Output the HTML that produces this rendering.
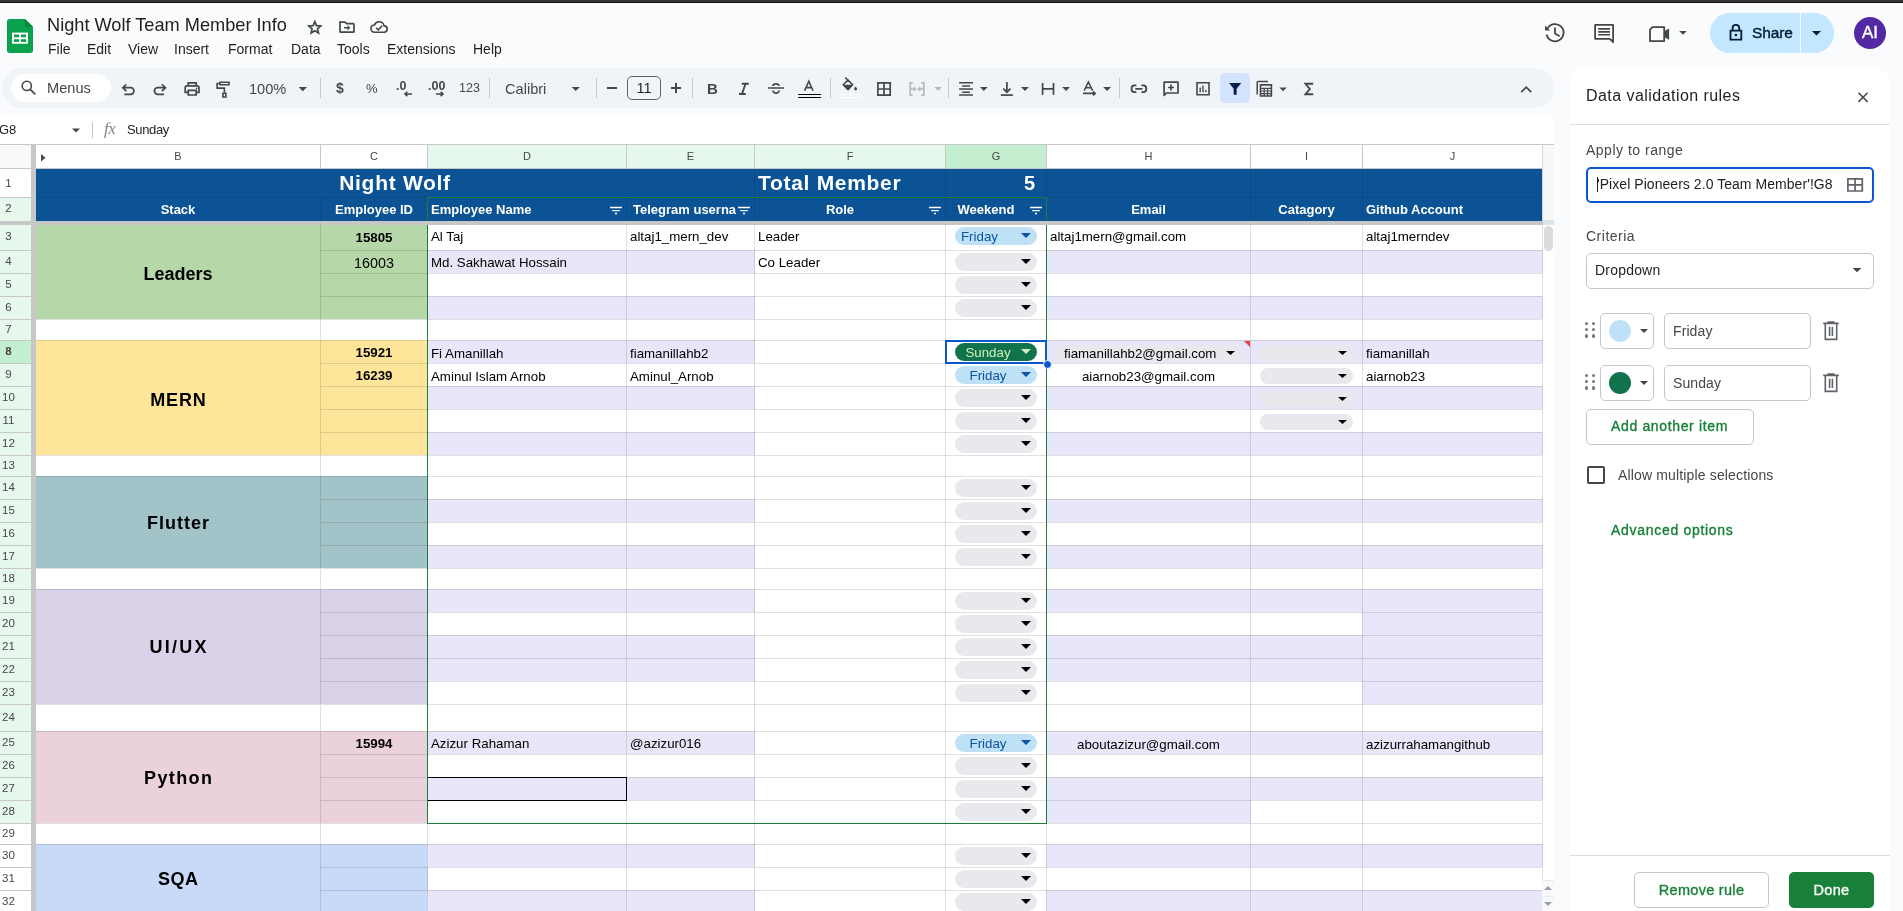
<!DOCTYPE html><html><head><meta charset="utf-8"><style>
html,body{margin:0;padding:0;}
body{width:1903px;height:911px;overflow:hidden;position:relative;background:#f9fbfd;font-family:"Liberation Sans", sans-serif;color:#1f1f1f;}
div{box-sizing:border-box;}
#wrap{position:absolute;left:0;top:0;width:1903px;height:911px;will-change:transform;}
</style></head><body><div id="wrap">
<div style="position:absolute;left:0px;top:0px;width:1903px;height:2px;background:#363636;"></div>
<div style="position:absolute;left:0px;top:2px;width:1903px;height:1px;background:#121212;"></div>
<svg style="position:absolute;left:7px;top:19px;" width="26" height="34" viewBox="0 0 26 35" preserveAspectRatio="none"><path d="M2.5 0H18L26 8V32.5C26 33.9 24.9 35 23.5 35H2.5C1.1 35 0 33.9 0 32.5V2.5C0 1.1 1.1 0 2.5 0Z" fill="#0ba24d"/><path d="M18 0L26 8H20C18.9 8 18 7.1 18 6Z" fill="#078a3c"/><rect x="5" y="14" width="16" height="11.5" fill="#fff"/><rect x="7" y="16" width="5" height="2.8" fill="#0ba24d"/><rect x="14" y="16" width="5" height="2.8" fill="#0ba24d"/><rect x="7" y="20.8" width="5" height="2.8" fill="#0ba24d"/><rect x="14" y="20.8" width="5" height="2.8" fill="#0ba24d"/></svg>
<div style="position:absolute;left:47px;top:14px;white-space:nowrap;font-size:18.2px;line-height:22px;color:#1f1f1f;">Night Wolf Team Member Info</div>
<svg style="position:absolute;left:300px;top:14px;overflow:visible" width="30" height="26" viewBox="300 14 30 26"><path d="M314.8 21.62 316.47 25.66 320.7 26.02 317.53 28.83 318.5 32.88 314.8 30.68 311.1 32.88 312.07 28.83 308.9 26.02 313.13 25.66Z" fill="none" stroke="#444746" stroke-width="1.7" stroke-linejoin="miter"/></svg>
<svg style="position:absolute;left:335px;top:16px;overflow:visible" width="25" height="22" viewBox="335 16 25 22"><path d="M340 22.2H345L346.6 23.6H353.2C353.6 23.6 354 24 354 24.4V31.4C354 31.8 353.6 32.2 353.2 32.2H340.8C340.4 32.2 340 31.8 340 31.4Z" fill="none" stroke="#444746" stroke-width="1.7" /><path d="M344 27H347.5V25.2L350.3 27.8 347.5 30.4V28.6H344Z" fill="#444746"/></svg>
<svg style="position:absolute;left:366px;top:16px;overflow:visible" width="26" height="22" viewBox="366 16 26 22"><path d="M374.5 32.2H384C385.9 32.2 387.2 30.9 387.2 29.1 387.2 27.3 385.8 26 384.1 25.9 383.6 23.3 381.7 21.8 379 21.8 376.8 21.8 375.2 23.1 374.5 25 372.4 25.1 370.9 26.7 370.9 28.6 370.9 30.6 372.5 32.2 374.5 32.2Z" fill="none" stroke="#444746" stroke-width="1.6" /><path d="M376.2 27.8L378.2 29.8 382.2 25.8" fill="none" stroke="#444746" stroke-width="1.6" /></svg>
<div style="position:absolute;left:48px;top:41px;white-space:nowrap;font-size:14px;line-height:17px;color:#1f1f1f;">File</div>
<div style="position:absolute;left:87px;top:41px;white-space:nowrap;font-size:14px;line-height:17px;color:#1f1f1f;">Edit</div>
<div style="position:absolute;left:128px;top:41px;white-space:nowrap;font-size:14px;line-height:17px;color:#1f1f1f;">View</div>
<div style="position:absolute;left:174px;top:41px;white-space:nowrap;font-size:14px;line-height:17px;color:#1f1f1f;">Insert</div>
<div style="position:absolute;left:228px;top:41px;white-space:nowrap;font-size:14px;line-height:17px;color:#1f1f1f;">Format</div>
<div style="position:absolute;left:291px;top:41px;white-space:nowrap;font-size:14px;line-height:17px;color:#1f1f1f;">Data</div>
<div style="position:absolute;left:337px;top:41px;white-space:nowrap;font-size:14px;line-height:17px;color:#1f1f1f;">Tools</div>
<div style="position:absolute;left:387px;top:41px;white-space:nowrap;font-size:14px;line-height:17px;color:#1f1f1f;">Extensions</div>
<div style="position:absolute;left:473px;top:41px;white-space:nowrap;font-size:14px;line-height:17px;color:#1f1f1f;">Help</div>
<svg style="position:absolute;left:1540px;top:18px;overflow:visible" width="30" height="30" viewBox="1540 18 30 30"><path d="M1547.5 28.5A8.6 8.6 0 1 1 1546.6 34.5" fill="none" stroke="#444746" stroke-width="1.8" /><path d="M1545 25.6V30.6H1550Z" fill="#444746"/><path d="M1555 27.5V33.5L1559.6 36.3" fill="none" stroke="#444746" stroke-width="1.8" /></svg>
<svg style="position:absolute;left:1590px;top:20px;overflow:visible" width="30" height="28" viewBox="1590 20 30 28"><path d="M1595.1 24.9H1613.1V42L1609.8 38.8H1595.1Z" fill="none" stroke="#444746" stroke-width="1.8" stroke-linejoin="round"/><path d="M1598.2 28.9H1610M1598.2 31.9H1610M1598.2 34.8H1610" fill="none" stroke="#444746" stroke-width="1.6" /></svg>
<svg style="position:absolute;left:1645px;top:22px;overflow:visible" width="30" height="24" viewBox="1645 22 30 24"><path d="M1652.5 27.1H1664.2V41.1H1650V29.6Z" fill="none" stroke="#444746" stroke-width="1.8" stroke-linejoin="round"/><path d="M1664.2 31.2L1669.1 28.5V39.7L1664.2 37Z" fill="#444746"/></svg>
<svg style="position:absolute;left:1675px;top:28px;overflow:visible" width="16" height="10" viewBox="1675 28 16 10"><path d="M1679.2 31H1686.8L1683.0 34.799999999999955z" fill="#444746"/></svg>
<div style="position:absolute;left:1710px;top:13px;width:124px;height:40px;background:#c2e7ff;border-radius:20px;"></div>
<div style="position:absolute;left:1800px;top:13px;width:1px;height:40px;background:#f9fbfd;"></div>
<svg style="position:absolute;left:1726px;top:20px;overflow:visible" width="22" height="24" viewBox="1726 20 22 24"><path d="M1732.6 30.4V28.1C1732.6 26 1734 24.8 1735.9 24.8 1737.8 24.8 1739.2 26 1739.2 28.1V30.4" fill="none" stroke="#001d35" stroke-width="1.8" /><path d="M1730.5 30.6H1741.3V39.6H1730.5Z" fill="none" stroke="#001d35" stroke-width="1.8" /><circle cx="1735.9" cy="35" r="1.3" fill="#001d35"/></svg>
<div style="position:absolute;left:1752px;top:24px;white-space:nowrap;font-size:15.5px;line-height:18px;color:#001d35;-webkit-text-stroke:0.4px #001d35;letter-spacing:-0.15px;">Share</div>
<svg style="position:absolute;left:1808px;top:28px;overflow:visible" width="16" height="10" viewBox="1808 28 16 10"><path d="M1812 31H1821L1816.5 35.5z" fill="#001d35"/></svg>
<div style="position:absolute;left:1854px;top:17px;width:32px;height:32px;background:#5229a3;border-radius:50%;"></div>
<div style="position:absolute;left:1854px;top:24px;white-space:nowrap;width:32px;text-align:center;font-size:17px;line-height:18px;color:#fff;-webkit-text-stroke:0.4px #fff;">AI</div>
<div style="position:absolute;left:2px;top:68px;width:1552px;height:40px;background:#f0f4f9;border-radius:20px;"></div>
<div style="position:absolute;left:11px;top:74px;width:100px;height:28px;background:#fff;border-radius:14px;"></div>
<svg style="position:absolute;left:18px;top:78px;overflow:visible" width="22" height="22" viewBox="18 78 22 22"><circle cx="26.8" cy="85.9" r="4.6" fill="none" stroke="#444746" stroke-width="1.6"/><path d="M30.2 89.3L35.3 94.4" fill="none" stroke="#444746" stroke-width="1.7" /></svg>
<div style="position:absolute;left:47px;top:80px;white-space:nowrap;font-size:14.6px;line-height:17px;color:#444746;">Menus</div>
<svg style="position:absolute;left:118px;top:80px;overflow:visible" width="20" height="18" viewBox="118 80 20 18"><path d="M124.3 94.3H130.6A3.3 3.3 0 0 0 130.6 87.7H123" fill="none" stroke="#444746" stroke-width="1.7" /><path d="M126.3 84.3L122.9 87.7 126.3 91.1" fill="none" stroke="#444746" stroke-width="1.7" /></svg>
<svg style="position:absolute;left:150px;top:80px;overflow:visible" width="20" height="18" viewBox="150 80 20 18"><path d="M164 94.3H157.7A3.3 3.3 0 0 1 157.7 87.7H165.3" fill="none" stroke="#444746" stroke-width="1.7" /><path d="M162 84.3L165.4 87.7 162 91.1" fill="none" stroke="#444746" stroke-width="1.7" /></svg>
<svg style="position:absolute;left:180px;top:78px;overflow:visible" width="24" height="22" viewBox="180 78 24 22"><path d="M188.3 85.5V82.9H196.2V85.5" fill="none" stroke="#444746" stroke-width="1.7" /><path d="M188.3 92.4H185.2V87.8C185.2 86.6 186 85.8 187.2 85.8H197C198.2 85.8 199 86.6 199 87.8V92.4H196.2" fill="none" stroke="#444746" stroke-width="1.7" /><path d="M188.3 90.4H196.2V95H188.3Z" fill="none" stroke="#444746" stroke-width="1.7" /><circle cx="196.6" cy="88.4" r="0.8" fill="#444746"/></svg>
<svg style="position:absolute;left:212px;top:78px;overflow:visible" width="22" height="22" viewBox="212 78 22 22"><path d="M220.1 82.2H229V84.8H220.1Z" fill="none" stroke="#444746" stroke-width="1.6" /><path d="M220.1 83.5H217.1V88.1H224.4V92.6" fill="none" stroke="#444746" stroke-width="1.6" /><path d="M222.9 93.2H225.9V97H222.9Z" fill="none" stroke="#444746" stroke-width="1.6" /></svg>
<div style="position:absolute;left:249px;top:80px;white-space:nowrap;font-size:14.6px;line-height:17px;color:#444746;top:80.5px;">100%</div>
<svg style="position:absolute;left:295px;top:84px;overflow:visible" width="16" height="10" viewBox="295 84 16 10"><path d="M298.6 87H307L302.8 91.19999999999999z" fill="#444746"/></svg>
<div style="position:absolute;left:320px;top:78px;width:1px;height:20px;background:#c7c7c7;"></div>
<div style="position:absolute;left:336px;top:81px;white-space:nowrap;font-size:14px;line-height:15px;color:#444746;font-weight:bold;">$</div>
<div style="position:absolute;left:366px;top:81px;white-space:nowrap;font-size:13px;line-height:15px;color:#444746;">%</div>
<div style="position:absolute;left:396px;top:79px;white-space:nowrap;font-size:12.5px;line-height:14px;color:#444746;font-weight:bold;">.0</div>
<svg style="position:absolute;left:402px;top:90px;overflow:visible" width="12" height="8" viewBox="402 90 12 8"><path d="M412 94H405M407.3 91.8L405 94 407.3 96.2" fill="none" stroke="#444746" stroke-width="1.6" /></svg>
<div style="position:absolute;left:428px;top:79px;white-space:nowrap;font-size:12.5px;line-height:14px;color:#444746;font-weight:bold;">.00</div>
<svg style="position:absolute;left:434px;top:90px;overflow:visible" width="12" height="8" viewBox="434 90 12 8"><path d="M436 94H443M440.7 91.8L443 94 440.7 96.2" fill="none" stroke="#444746" stroke-width="1.6" /></svg>
<div style="position:absolute;left:459px;top:81px;white-space:nowrap;font-size:12.5px;line-height:14px;color:#444746;">123</div>
<div style="position:absolute;left:489px;top:78px;width:1px;height:20px;background:#c7c7c7;"></div>
<div style="position:absolute;left:505px;top:80px;white-space:nowrap;font-size:14.6px;line-height:17px;color:#444746;top:80.5px;">Calibri</div>
<svg style="position:absolute;left:568px;top:84px;overflow:visible" width="16" height="10" viewBox="568 84 16 10"><path d="M571.7 87H579.8L575.75 91.04999999999995z" fill="#444746"/></svg>
<div style="position:absolute;left:596px;top:78px;width:1px;height:20px;background:#c7c7c7;"></div>
<div style="position:absolute;left:607px;top:87px;width:10px;height:2px;background:#444746;"></div>
<div style="position:absolute;left:627px;top:76px;width:34px;height:24px;border:1px solid #5f6368;border-radius:5px;"></div>
<div style="position:absolute;left:627px;top:80px;white-space:nowrap;width:34px;text-align:center;font-size:14.6px;line-height:17px;color:#1f1f1f;">11</div>
<div style="position:absolute;left:671px;top:87px;width:10px;height:2px;background:#444746;"></div>
<div style="position:absolute;left:675px;top:83px;width:2px;height:10px;background:#444746;"></div>
<div style="position:absolute;left:692px;top:78px;width:1px;height:20px;background:#c7c7c7;"></div>
<div style="position:absolute;left:707px;top:80px;white-space:nowrap;font-size:15px;line-height:17px;color:#444746;font-weight:bold;">B</div>
<svg style="position:absolute;left:736px;top:80px;overflow:visible" width="16" height="18" viewBox="736 80 16 18"><path d="M741.8 83.8H748.8M739 94H745.8M745.5 83.8L742 94" fill="none" stroke="#444746" stroke-width="1.9" /></svg>
<svg style="position:absolute;left:766px;top:80px;overflow:visible" width="20" height="18" viewBox="766 80 20 18"><path d="M768 88H784" fill="none" stroke="#444746" stroke-width="1.5" /><path d="M779.2 85.8C778.8 84.6 777.6 83.8 776 83.8 774.3 83.8 773 84.8 772.9 86" fill="none" stroke="#444746" stroke-width="1.8" /><path d="M773 90.5C773.2 92 774.5 93.2 776 93.2 777.6 93.2 778.9 92.2 779.1 90.5" fill="none" stroke="#444746" stroke-width="1.8" /></svg>
<svg style="position:absolute;left:796px;top:78px;overflow:visible" width="28" height="22" viewBox="796 78 28 22"><path d="M804.6 90.8L808.8 81.2 813 90.8M806 87.6H811.6" fill="none" stroke="#444746" stroke-width="1.6" /></svg>
<div style="position:absolute;left:798px;top:94px;width:23px;height:1px;background:#000;"></div>
<div style="position:absolute;left:798px;top:97px;width:23px;height:1px;background:#000;"></div>
<div style="position:absolute;left:830px;top:78px;width:1px;height:20px;background:#c7c7c7;"></div>
<svg style="position:absolute;left:838px;top:75px;overflow:visible" width="24" height="18" viewBox="838 75 24 18"><path d="M845.2 77.5L848.2 80.6" fill="none" stroke="#444746" stroke-width="1.5" /><path d="M843.2 84.8L848 80 852.6 84.8 848 89.6Z" fill="none" stroke="#444746" stroke-width="1.6" stroke-linejoin="round"/><path d="M843.2 84.8H852.6L848 89.6Z" fill="#444746"/><path d="M855.6 86.6C856.4 87.6 857 88.4 857 89.1 857 89.9 856.4 90.5 855.6 90.5 854.8 90.5 854.2 89.9 854.2 89.1 854.2 88.4 854.8 87.6 855.6 86.6Z" fill="#444746"/></svg>
<div style="position:absolute;left:839px;top:94px;width:23px;height:1px;background:#fff;"></div>
<div style="position:absolute;left:839px;top:97px;width:23px;height:1px;background:#fff;"></div>
<svg style="position:absolute;left:875px;top:80px;overflow:visible" width="18" height="18" viewBox="875 80 18 18"><path d="M877.9 82.9H890.2V95.2H877.9ZM884 82.9V95.2M877.9 89H890.2" fill="none" stroke="#444746" stroke-width="1.7" /></svg>
<svg style="position:absolute;left:906px;top:80px;overflow:visible" width="22" height="18" viewBox="906 80 22 18"><path d="M912.8 82.8H910.2V95.2H912.8M921.2 82.8H923.8V95.2H921.2" fill="none" stroke="#b3b6b9" stroke-width="1.6" /><path d="M910.8 89H915.6M913.8 87.2L915.6 89 913.8 90.8M923.2 89H918.4M920.2 87.2L918.4 89 920.2 90.8" fill="none" stroke="#b3b6b9" stroke-width="1.5" /></svg>
<svg style="position:absolute;left:932px;top:85px;overflow:visible" width="12" height="8" viewBox="932 85 12 8"><path d="M934.3 87H941.9L938.0999999999999 90.80000000000001z" fill="#b3b6b9"/></svg>
<div style="position:absolute;left:948px;top:78px;width:1px;height:20px;background:#c7c7c7;"></div>
<svg style="position:absolute;left:956px;top:80px;overflow:visible" width="20" height="18" viewBox="956 80 20 18"><path d="M959.1 82.8H973M962.1 85.9H970M959.1 89.1H973M962.1 92.2H970M959.1 95.1H973" fill="none" stroke="#444746" stroke-width="1.5" /></svg>
<svg style="position:absolute;left:978px;top:85px;overflow:visible" width="12" height="8" viewBox="978 85 12 8"><path d="M980 87.1H987.7L983.85 90.95000000000002z" fill="#444746"/></svg>
<svg style="position:absolute;left:998px;top:80px;overflow:visible" width="18" height="18" viewBox="998 80 18 18"><path d="M1006.9 82V92" fill="none" stroke="#444746" stroke-width="1.7" /><path d="M1003.3 88.6L1006.9 92.2 1010.5 88.6" fill="none" stroke="#444746" stroke-width="1.7" /><path d="M1000.9 95.1H1012.9" fill="none" stroke="#444746" stroke-width="1.7" /></svg>
<svg style="position:absolute;left:1019px;top:85px;overflow:visible" width="12" height="8" viewBox="1019 85 12 8"><path d="M1021 87.1H1028.9L1024.95 91.05000000000004z" fill="#444746"/></svg>
<svg style="position:absolute;left:1040px;top:80px;overflow:visible" width="18" height="18" viewBox="1040 80 18 18"><path d="M1042.6 83V94.7M1053.5 83V94.7M1042.6 88.8H1053.5" fill="none" stroke="#444746" stroke-width="1.7" /></svg>
<svg style="position:absolute;left:1060px;top:85px;overflow:visible" width="12" height="8" viewBox="1060 85 12 8"><path d="M1062.2 87.1H1069.9L1066.0500000000002 90.95000000000002z" fill="#444746"/></svg>
<svg style="position:absolute;left:1080px;top:80px;overflow:visible" width="20" height="18" viewBox="1080 80 20 18"><path d="M1084.2 90.7L1088.4 82 1092.6 90.7M1085.5 87.7H1091.3" fill="none" stroke="#444746" stroke-width="1.5" /><path d="M1083 93.4H1095M1093 91.4L1095.2 93.4 1093 95.4" fill="none" stroke="#444746" stroke-width="1.6" /></svg>
<svg style="position:absolute;left:1101px;top:85px;overflow:visible" width="12" height="8" viewBox="1101 85 12 8"><path d="M1103.1 87.1H1111.1L1107.1 91.1z" fill="#444746"/></svg>
<div style="position:absolute;left:1119px;top:78px;width:1px;height:20px;background:#c7c7c7;"></div>
<svg style="position:absolute;left:1128px;top:80px;overflow:visible" width="22" height="18" viewBox="1128 80 22 18"><path d="M1136.4 85.4H1134.4C1132.5 85.4 1131.5 86.6 1131.5 88.8 1131.5 91 1132.5 92.2 1134.4 92.2H1136.4M1141.4 85.4H1143.4C1145.3 85.4 1146.3 86.6 1146.3 88.8 1146.3 91 1145.3 92.2 1143.4 92.2H1141.4M1135.3 88.8H1142.5" fill="none" stroke="#444746" stroke-width="1.8" /></svg>
<svg style="position:absolute;left:1160px;top:79px;overflow:visible" width="22" height="20" viewBox="1160 79 22 20"><path d="M1164.1 82.2H1178V93H1166.4L1164.1 95.3Z" fill="none" stroke="#444746" stroke-width="1.7" stroke-linejoin="round"/><path d="M1171 84.6V90.4M1168.1 87.5H1173.9" fill="none" stroke="#444746" stroke-width="1.7" /></svg>
<svg style="position:absolute;left:1194px;top:79px;overflow:visible" width="18" height="18" viewBox="1194 79 18 18"><path d="M1197 82.7H1209V94.7H1197Z" fill="none" stroke="#444746" stroke-width="1.6" /><path d="M1200.2 87.5V92.3M1203 85.4V92.3M1205.8 90V92.3" fill="none" stroke="#444746" stroke-width="1.4" /></svg>
<div style="position:absolute;left:1220px;top:73px;width:30px;height:30px;background:#d3e3fd;border-radius:5px;"></div>
<svg style="position:absolute;left:1226px;top:80px;overflow:visible" width="18" height="18" viewBox="1226 80 18 18"><path d="M1229 83H1241.3L1236.6 88.8V94.7H1233.7V88.8Z" fill="#041e49"/></svg>
<svg style="position:absolute;left:1254px;top:79px;overflow:visible" width="22" height="20" viewBox="1254 79 22 20"><path d="M1257.2 94.6V82.5C1257.2 81.9 1257.6 81.5 1258.2 81.5H1268" fill="none" stroke="#444746" stroke-width="1.5" /><path d="M1260.5 84.9H1271.4V96H1260.5Z" fill="none" stroke="#444746" stroke-width="1.6" /><path d="M1260.8 88.3H1271M1260.8 91H1271M1260.8 93.6H1271M1264.2 88.3V96M1267.6 88.3V96" fill="none" stroke="#444746" stroke-width="1.2" /></svg>
<svg style="position:absolute;left:1277px;top:85px;overflow:visible" width="12" height="8" viewBox="1277 85 12 8"><path d="M1279.4 87.6H1286.7L1283.0500000000002 91.24999999999997z" fill="#444746"/></svg>
<svg style="position:absolute;left:1302px;top:80px;overflow:visible" width="14" height="18" viewBox="1302 80 14 18"><path d="M1313.2 83.8H1305.5L1309.8 89 1305.5 94.2H1313.2" fill="none" stroke="#444746" stroke-width="1.9" stroke-linejoin="miter"/></svg>
<svg style="position:absolute;left:1514px;top:82px;overflow:visible" width="24" height="14" viewBox="1514 82 24 14"><path d="M1521.2 92.2L1526.2 87.2 1531.2 92.2" fill="none" stroke="#444746" stroke-width="1.7" /></svg>
<div style="position:absolute;left:0px;top:116px;width:1554px;height:28px;background:#fff;"></div>
<div style="position:absolute;left:-1px;top:122px;white-space:nowrap;font-size:13px;line-height:16px;color:#1f1f1f;">G8</div>
<svg style="position:absolute;left:68px;top:126px;overflow:visible" width="16" height="10" viewBox="68 126 16 10"><path d="M72 128.5H80L76.0 132.5z" fill="#444746"/></svg>
<div style="position:absolute;left:92px;top:122px;width:1px;height:16px;background:#c7c7c7;"></div>
<div style="position:absolute;left:104px;top:120px;white-space:nowrap;font-family:'Liberation Serif',serif;font-size:17px;line-height:18px;color:#80868b;letter-spacing:-0.5px;"><i>fx</i></div>
<div style="position:absolute;left:127px;top:122px;white-space:nowrap;font-size:13px;line-height:16px;color:#1f1f1f;letter-spacing:-0.35px;">Sunday</div>
<div style="position:absolute;left:0px;top:145px;width:1554px;height:766px;background:#fff;"></div>
<div style="position:absolute;left:1542px;top:145px;width:12px;height:766px;background:#fff;"></div>
<div style="position:absolute;left:0px;top:144px;width:1554px;height:1px;background:#c7c7c7;"></div>
<div style="position:absolute;left:0px;top:145px;width:31px;height:23px;background:#f8f9fa;"></div>
<div style="position:absolute;left:36px;top:145px;width:284px;height:23px;background:#fff;"></div>
<div style="position:absolute;left:320px;top:145px;width:1px;height:23px;background:#c7c7c7;"></div>
<div style="position:absolute;left:36px;top:148px;white-space:nowrap;width:284px;text-align:center;font-size:11px;line-height:16px;color:#444746;">B</div>
<div style="position:absolute;left:321px;top:145px;width:106px;height:23px;background:#fff;"></div>
<div style="position:absolute;left:427px;top:145px;width:1px;height:23px;background:#c7c7c7;"></div>
<div style="position:absolute;left:321px;top:148px;white-space:nowrap;width:106px;text-align:center;font-size:11px;line-height:16px;color:#444746;">C</div>
<div style="position:absolute;left:428px;top:145px;width:198px;height:23px;background:#e6f7eb;"></div>
<div style="position:absolute;left:626px;top:145px;width:1px;height:23px;background:#c7c7c7;"></div>
<div style="position:absolute;left:428px;top:148px;white-space:nowrap;width:198px;text-align:center;font-size:11px;line-height:16px;color:#444746;">D</div>
<div style="position:absolute;left:627px;top:145px;width:127px;height:23px;background:#e6f7eb;"></div>
<div style="position:absolute;left:754px;top:145px;width:1px;height:23px;background:#c7c7c7;"></div>
<div style="position:absolute;left:627px;top:148px;white-space:nowrap;width:127px;text-align:center;font-size:11px;line-height:16px;color:#444746;">E</div>
<div style="position:absolute;left:755px;top:145px;width:190px;height:23px;background:#e6f7eb;"></div>
<div style="position:absolute;left:945px;top:145px;width:1px;height:23px;background:#c7c7c7;"></div>
<div style="position:absolute;left:755px;top:148px;white-space:nowrap;width:190px;text-align:center;font-size:11px;line-height:16px;color:#444746;">F</div>
<div style="position:absolute;left:946px;top:145px;width:100px;height:23px;background:#c4eed0;"></div>
<div style="position:absolute;left:1046px;top:145px;width:1px;height:23px;background:#c7c7c7;"></div>
<div style="position:absolute;left:946px;top:148px;white-space:nowrap;width:100px;text-align:center;font-size:11px;line-height:16px;color:#444746;">G</div>
<div style="position:absolute;left:1047px;top:145px;width:203px;height:23px;background:#fff;"></div>
<div style="position:absolute;left:1250px;top:145px;width:1px;height:23px;background:#c7c7c7;"></div>
<div style="position:absolute;left:1047px;top:148px;white-space:nowrap;width:203px;text-align:center;font-size:11px;line-height:16px;color:#444746;">H</div>
<div style="position:absolute;left:1251px;top:145px;width:111px;height:23px;background:#fff;"></div>
<div style="position:absolute;left:1362px;top:145px;width:1px;height:23px;background:#c7c7c7;"></div>
<div style="position:absolute;left:1251px;top:148px;white-space:nowrap;width:111px;text-align:center;font-size:11px;line-height:16px;color:#444746;">I</div>
<div style="position:absolute;left:1363px;top:145px;width:179px;height:23px;background:#fff;"></div>
<div style="position:absolute;left:1542px;top:145px;width:1px;height:23px;background:#c7c7c7;"></div>
<div style="position:absolute;left:1363px;top:148px;white-space:nowrap;width:179px;text-align:center;font-size:11px;line-height:16px;color:#444746;">J</div>
<div style="position:absolute;left:0px;top:168px;width:1542px;height:1px;background:#c7c7c7;"></div>
<div style="position:absolute;left:1543px;top:145px;width:11px;height:76px;background:#f8f8f8;"></div>
<svg style="position:absolute;left:41px;top:154px;" width="5" height="8" viewBox="0 0 5 8" preserveAspectRatio="none"><path d="M0 0L4.5 3.8 0 7.6z" fill="#444746"/></svg>
<div style="position:absolute;left:0px;top:169px;width:31px;height:28px;background:#fff;"></div>
<div style="position:absolute;left:0px;top:197px;width:31px;height:1px;background:#c7c7c7;"></div>
<div style="position:absolute;left:0px;top:175px;white-space:nowrap;width:17px;text-align:center;font-size:11.5px;line-height:16px;color:#444746;font-weight:normal;">1</div>
<div style="position:absolute;left:0px;top:198px;width:31px;height:23px;background:#e6f7eb;"></div>
<div style="position:absolute;left:0px;top:221px;width:31px;height:1px;background:#c7c7c7;"></div>
<div style="position:absolute;left:0px;top:200px;white-space:nowrap;width:17px;text-align:center;font-size:11.5px;line-height:16px;color:#444746;font-weight:normal;">2</div>
<div style="position:absolute;left:0px;top:225px;width:31px;height:25px;background:#e6f7eb;"></div>
<div style="position:absolute;left:0px;top:250px;width:31px;height:1px;background:#c7c7c7;"></div>
<div style="position:absolute;left:0px;top:228px;white-space:nowrap;width:17px;text-align:center;font-size:11.5px;line-height:16px;color:#444746;font-weight:normal;">3</div>
<div style="position:absolute;left:0px;top:251px;width:31px;height:22px;background:#e6f7eb;"></div>
<div style="position:absolute;left:0px;top:273px;width:31px;height:1px;background:#c7c7c7;"></div>
<div style="position:absolute;left:0px;top:253px;white-space:nowrap;width:17px;text-align:center;font-size:11.5px;line-height:16px;color:#444746;font-weight:normal;">4</div>
<div style="position:absolute;left:0px;top:274px;width:31px;height:22px;background:#e6f7eb;"></div>
<div style="position:absolute;left:0px;top:296px;width:31px;height:1px;background:#c7c7c7;"></div>
<div style="position:absolute;left:0px;top:276px;white-space:nowrap;width:17px;text-align:center;font-size:11.5px;line-height:16px;color:#444746;font-weight:normal;">5</div>
<div style="position:absolute;left:0px;top:297px;width:31px;height:22px;background:#e6f7eb;"></div>
<div style="position:absolute;left:0px;top:319px;width:31px;height:1px;background:#c7c7c7;"></div>
<div style="position:absolute;left:0px;top:299px;white-space:nowrap;width:17px;text-align:center;font-size:11.5px;line-height:16px;color:#444746;font-weight:normal;">6</div>
<div style="position:absolute;left:0px;top:320px;width:31px;height:20px;background:#e6f7eb;"></div>
<div style="position:absolute;left:0px;top:340px;width:31px;height:1px;background:#c7c7c7;"></div>
<div style="position:absolute;left:0px;top:321px;white-space:nowrap;width:17px;text-align:center;font-size:11.5px;line-height:16px;color:#444746;font-weight:normal;">7</div>
<div style="position:absolute;left:0px;top:341px;width:31px;height:22px;background:#c4eed0;"></div>
<div style="position:absolute;left:0px;top:363px;width:31px;height:1px;background:#c7c7c7;"></div>
<div style="position:absolute;left:0px;top:343px;white-space:nowrap;width:17px;text-align:center;font-size:11.5px;line-height:16px;color:#444746;font-weight:bold;">8</div>
<div style="position:absolute;left:0px;top:364px;width:31px;height:22px;background:#e6f7eb;"></div>
<div style="position:absolute;left:0px;top:386px;width:31px;height:1px;background:#c7c7c7;"></div>
<div style="position:absolute;left:0px;top:366px;white-space:nowrap;width:17px;text-align:center;font-size:11.5px;line-height:16px;color:#444746;font-weight:normal;">9</div>
<div style="position:absolute;left:0px;top:387px;width:31px;height:22px;background:#e6f7eb;"></div>
<div style="position:absolute;left:0px;top:409px;width:31px;height:1px;background:#c7c7c7;"></div>
<div style="position:absolute;left:0px;top:389px;white-space:nowrap;width:17px;text-align:center;font-size:11.5px;line-height:16px;color:#444746;font-weight:normal;">10</div>
<div style="position:absolute;left:0px;top:410px;width:31px;height:22px;background:#e6f7eb;"></div>
<div style="position:absolute;left:0px;top:432px;width:31px;height:1px;background:#c7c7c7;"></div>
<div style="position:absolute;left:0px;top:412px;white-space:nowrap;width:17px;text-align:center;font-size:11.5px;line-height:16px;color:#444746;font-weight:normal;">11</div>
<div style="position:absolute;left:0px;top:433px;width:31px;height:22px;background:#e6f7eb;"></div>
<div style="position:absolute;left:0px;top:455px;width:31px;height:1px;background:#c7c7c7;"></div>
<div style="position:absolute;left:0px;top:435px;white-space:nowrap;width:17px;text-align:center;font-size:11.5px;line-height:16px;color:#444746;font-weight:normal;">12</div>
<div style="position:absolute;left:0px;top:456px;width:31px;height:20px;background:#e6f7eb;"></div>
<div style="position:absolute;left:0px;top:476px;width:31px;height:1px;background:#c7c7c7;"></div>
<div style="position:absolute;left:0px;top:457px;white-space:nowrap;width:17px;text-align:center;font-size:11.5px;line-height:16px;color:#444746;font-weight:normal;">13</div>
<div style="position:absolute;left:0px;top:477px;width:31px;height:22px;background:#e6f7eb;"></div>
<div style="position:absolute;left:0px;top:499px;width:31px;height:1px;background:#c7c7c7;"></div>
<div style="position:absolute;left:0px;top:479px;white-space:nowrap;width:17px;text-align:center;font-size:11.5px;line-height:16px;color:#444746;font-weight:normal;">14</div>
<div style="position:absolute;left:0px;top:500px;width:31px;height:22px;background:#e6f7eb;"></div>
<div style="position:absolute;left:0px;top:522px;width:31px;height:1px;background:#c7c7c7;"></div>
<div style="position:absolute;left:0px;top:502px;white-space:nowrap;width:17px;text-align:center;font-size:11.5px;line-height:16px;color:#444746;font-weight:normal;">15</div>
<div style="position:absolute;left:0px;top:523px;width:31px;height:22px;background:#e6f7eb;"></div>
<div style="position:absolute;left:0px;top:545px;width:31px;height:1px;background:#c7c7c7;"></div>
<div style="position:absolute;left:0px;top:525px;white-space:nowrap;width:17px;text-align:center;font-size:11.5px;line-height:16px;color:#444746;font-weight:normal;">16</div>
<div style="position:absolute;left:0px;top:546px;width:31px;height:22px;background:#e6f7eb;"></div>
<div style="position:absolute;left:0px;top:568px;width:31px;height:1px;background:#c7c7c7;"></div>
<div style="position:absolute;left:0px;top:548px;white-space:nowrap;width:17px;text-align:center;font-size:11.5px;line-height:16px;color:#444746;font-weight:normal;">17</div>
<div style="position:absolute;left:0px;top:569px;width:31px;height:20px;background:#e6f7eb;"></div>
<div style="position:absolute;left:0px;top:589px;width:31px;height:1px;background:#c7c7c7;"></div>
<div style="position:absolute;left:0px;top:570px;white-space:nowrap;width:17px;text-align:center;font-size:11.5px;line-height:16px;color:#444746;font-weight:normal;">18</div>
<div style="position:absolute;left:0px;top:590px;width:31px;height:22px;background:#e6f7eb;"></div>
<div style="position:absolute;left:0px;top:612px;width:31px;height:1px;background:#c7c7c7;"></div>
<div style="position:absolute;left:0px;top:592px;white-space:nowrap;width:17px;text-align:center;font-size:11.5px;line-height:16px;color:#444746;font-weight:normal;">19</div>
<div style="position:absolute;left:0px;top:613px;width:31px;height:22px;background:#e6f7eb;"></div>
<div style="position:absolute;left:0px;top:635px;width:31px;height:1px;background:#c7c7c7;"></div>
<div style="position:absolute;left:0px;top:615px;white-space:nowrap;width:17px;text-align:center;font-size:11.5px;line-height:16px;color:#444746;font-weight:normal;">20</div>
<div style="position:absolute;left:0px;top:636px;width:31px;height:22px;background:#e6f7eb;"></div>
<div style="position:absolute;left:0px;top:658px;width:31px;height:1px;background:#c7c7c7;"></div>
<div style="position:absolute;left:0px;top:638px;white-space:nowrap;width:17px;text-align:center;font-size:11.5px;line-height:16px;color:#444746;font-weight:normal;">21</div>
<div style="position:absolute;left:0px;top:659px;width:31px;height:22px;background:#e6f7eb;"></div>
<div style="position:absolute;left:0px;top:681px;width:31px;height:1px;background:#c7c7c7;"></div>
<div style="position:absolute;left:0px;top:661px;white-space:nowrap;width:17px;text-align:center;font-size:11.5px;line-height:16px;color:#444746;font-weight:normal;">22</div>
<div style="position:absolute;left:0px;top:682px;width:31px;height:22px;background:#e6f7eb;"></div>
<div style="position:absolute;left:0px;top:704px;width:31px;height:1px;background:#c7c7c7;"></div>
<div style="position:absolute;left:0px;top:684px;white-space:nowrap;width:17px;text-align:center;font-size:11.5px;line-height:16px;color:#444746;font-weight:normal;">23</div>
<div style="position:absolute;left:0px;top:705px;width:31px;height:26px;background:#e6f7eb;"></div>
<div style="position:absolute;left:0px;top:731px;width:31px;height:1px;background:#c7c7c7;"></div>
<div style="position:absolute;left:0px;top:709px;white-space:nowrap;width:17px;text-align:center;font-size:11.5px;line-height:16px;color:#444746;font-weight:normal;">24</div>
<div style="position:absolute;left:0px;top:732px;width:31px;height:22px;background:#e6f7eb;"></div>
<div style="position:absolute;left:0px;top:754px;width:31px;height:1px;background:#c7c7c7;"></div>
<div style="position:absolute;left:0px;top:734px;white-space:nowrap;width:17px;text-align:center;font-size:11.5px;line-height:16px;color:#444746;font-weight:normal;">25</div>
<div style="position:absolute;left:0px;top:755px;width:31px;height:22px;background:#e6f7eb;"></div>
<div style="position:absolute;left:0px;top:777px;width:31px;height:1px;background:#c7c7c7;"></div>
<div style="position:absolute;left:0px;top:757px;white-space:nowrap;width:17px;text-align:center;font-size:11.5px;line-height:16px;color:#444746;font-weight:normal;">26</div>
<div style="position:absolute;left:0px;top:778px;width:31px;height:22px;background:#e6f7eb;"></div>
<div style="position:absolute;left:0px;top:800px;width:31px;height:1px;background:#c7c7c7;"></div>
<div style="position:absolute;left:0px;top:780px;white-space:nowrap;width:17px;text-align:center;font-size:11.5px;line-height:16px;color:#444746;font-weight:normal;">27</div>
<div style="position:absolute;left:0px;top:801px;width:31px;height:22px;background:#e6f7eb;"></div>
<div style="position:absolute;left:0px;top:823px;width:31px;height:1px;background:#c7c7c7;"></div>
<div style="position:absolute;left:0px;top:803px;white-space:nowrap;width:17px;text-align:center;font-size:11.5px;line-height:16px;color:#444746;font-weight:normal;">28</div>
<div style="position:absolute;left:0px;top:824px;width:31px;height:20px;background:#fff;"></div>
<div style="position:absolute;left:0px;top:844px;width:31px;height:1px;background:#c7c7c7;"></div>
<div style="position:absolute;left:0px;top:825px;white-space:nowrap;width:17px;text-align:center;font-size:11.5px;line-height:16px;color:#444746;font-weight:normal;">29</div>
<div style="position:absolute;left:0px;top:845px;width:31px;height:22px;background:#fff;"></div>
<div style="position:absolute;left:0px;top:867px;width:31px;height:1px;background:#c7c7c7;"></div>
<div style="position:absolute;left:0px;top:847px;white-space:nowrap;width:17px;text-align:center;font-size:11.5px;line-height:16px;color:#444746;font-weight:normal;">30</div>
<div style="position:absolute;left:0px;top:868px;width:31px;height:22px;background:#fff;"></div>
<div style="position:absolute;left:0px;top:890px;width:31px;height:1px;background:#c7c7c7;"></div>
<div style="position:absolute;left:0px;top:870px;white-space:nowrap;width:17px;text-align:center;font-size:11.5px;line-height:16px;color:#444746;font-weight:normal;">31</div>
<div style="position:absolute;left:0px;top:891px;width:31px;height:22px;background:#fff;"></div>
<div style="position:absolute;left:0px;top:913px;width:31px;height:1px;background:#c7c7c7;"></div>
<div style="position:absolute;left:0px;top:893px;white-space:nowrap;width:17px;text-align:center;font-size:11.5px;line-height:16px;color:#444746;font-weight:normal;">32</div>
<div style="position:absolute;left:31px;top:145px;width:5px;height:766px;background:#c7c7c7;"></div>
<div style="position:absolute;left:0px;top:221px;width:1554px;height:4px;background:#c7c7c7;"></div>
<div style="position:absolute;left:1543px;top:220px;width:11px;height:5px;background:#dde3ea;"></div>
<div style="position:absolute;left:1542px;top:145px;width:1px;height:76px;background:#d3d3d3;"></div>
<div style="position:absolute;left:36px;top:169px;width:1506px;height:52px;background:#0b5394;"></div>
<div style="position:absolute;left:36px;top:197px;width:1506px;height:1px;background:#0a4a85;"></div>
<div style="position:absolute;left:754px;top:169px;width:1px;height:28px;background:#0a4a85;"></div>
<div style="position:absolute;left:945px;top:169px;width:1px;height:28px;background:#0a4a85;"></div>
<div style="position:absolute;left:1046px;top:169px;width:1px;height:28px;background:#0a4a85;"></div>
<div style="position:absolute;left:1250px;top:169px;width:1px;height:28px;background:#0a4a85;"></div>
<div style="position:absolute;left:1362px;top:169px;width:1px;height:28px;background:#0a4a85;"></div>
<div style="position:absolute;left:320px;top:198px;width:1px;height:23px;background:#0a4a85;"></div>
<div style="position:absolute;left:427px;top:198px;width:1px;height:23px;background:#0a4a85;"></div>
<div style="position:absolute;left:626px;top:198px;width:1px;height:23px;background:#0a4a85;"></div>
<div style="position:absolute;left:754px;top:198px;width:1px;height:23px;background:#0a4a85;"></div>
<div style="position:absolute;left:945px;top:198px;width:1px;height:23px;background:#0a4a85;"></div>
<div style="position:absolute;left:1046px;top:198px;width:1px;height:23px;background:#0a4a85;"></div>
<div style="position:absolute;left:1250px;top:198px;width:1px;height:23px;background:#0a4a85;"></div>
<div style="position:absolute;left:1362px;top:198px;width:1px;height:23px;background:#0a4a85;"></div>
<div style="position:absolute;left:36px;top:171px;white-space:nowrap;width:718px;text-align:center;font-size:21px;line-height:24px;letter-spacing:0.7px;font-weight:bold;color:#fff;">Night Wolf</div>
<div style="position:absolute;left:758px;top:171px;white-space:nowrap;font-size:21px;line-height:24px;letter-spacing:0.7px;font-weight:bold;color:#fff;">Total Member</div>
<div style="position:absolute;left:946px;top:171px;white-space:nowrap;width:89px;text-align:right;font-size:20px;line-height:24px;font-weight:bold;color:#fff;">5</div>
<div style="position:absolute;left:36px;top:202px;white-space:nowrap;width:284px;text-align:center;font-size:13px;line-height:16px;font-weight:bold;color:#fff;">Stack</div>
<div style="position:absolute;left:321px;top:202px;white-space:nowrap;width:106px;text-align:center;font-size:13px;line-height:16px;font-weight:bold;color:#fff;">Employee ID</div>
<div style="position:absolute;left:431px;top:202px;white-space:nowrap;font-size:13px;line-height:16px;font-weight:bold;color:#fff;">Employee Name</div>
<div style="position:absolute;left:633px;top:202px;white-space:nowrap;font-size:13px;line-height:16px;font-weight:bold;color:#fff;">Telegram userna</div>
<div style="position:absolute;left:755px;top:202px;white-space:nowrap;width:170px;text-align:center;font-size:13px;line-height:16px;font-weight:bold;color:#fff;">Role</div>
<div style="position:absolute;left:946px;top:202px;white-space:nowrap;width:80px;text-align:center;font-size:13px;line-height:16px;font-weight:bold;color:#fff;">Weekend</div>
<div style="position:absolute;left:1047px;top:202px;white-space:nowrap;width:203px;text-align:center;font-size:13px;line-height:16px;font-weight:bold;color:#fff;">Email</div>
<div style="position:absolute;left:1251px;top:202px;white-space:nowrap;width:111px;text-align:center;font-size:13px;line-height:16px;font-weight:bold;color:#fff;">Catagory</div>
<div style="position:absolute;left:1366px;top:202px;white-space:nowrap;font-size:13px;line-height:16px;font-weight:bold;color:#fff;">Github Account</div>
<svg style="position:absolute;left:610px;top:204px" width="14" height="12" viewBox="0 0 14 12"><path d="M0 3.5H12M2.2 6.6H9.8M5 9.5H7" stroke="#fff" stroke-width="1.35" fill="none"/></svg>
<svg style="position:absolute;left:738px;top:204px" width="14" height="12" viewBox="0 0 14 12"><path d="M0 3.5H12M2.2 6.6H9.8M5 9.5H7" stroke="#fff" stroke-width="1.35" fill="none"/></svg>
<svg style="position:absolute;left:929px;top:204px" width="14" height="12" viewBox="0 0 14 12"><path d="M0 3.5H12M2.2 6.6H9.8M5 9.5H7" stroke="#fff" stroke-width="1.35" fill="none"/></svg>
<svg style="position:absolute;left:1030px;top:204px" width="14" height="12" viewBox="0 0 14 12"><path d="M0 3.5H12M2.2 6.6H9.8M5 9.5H7" stroke="#fff" stroke-width="1.35" fill="none"/></svg>
<div style="position:absolute;left:320px;top:225px;width:108px;height:25px;background:#b6d7a8;"></div>
<div style="position:absolute;left:320px;top:250px;width:108px;height:23px;background:#b6d7a8;"></div>
<div style="position:absolute;left:427px;top:250px;width:200px;height:23px;background:#e8e7fa;"></div>
<div style="position:absolute;left:626px;top:250px;width:129px;height:23px;background:#e8e7fa;"></div>
<div style="position:absolute;left:1046px;top:250px;width:205px;height:23px;background:#e8e7fa;"></div>
<div style="position:absolute;left:1250px;top:250px;width:113px;height:23px;background:#e8e7fa;"></div>
<div style="position:absolute;left:1362px;top:250px;width:181px;height:23px;background:#e8e7fa;"></div>
<div style="position:absolute;left:320px;top:273px;width:108px;height:23px;background:#b6d7a8;"></div>
<div style="position:absolute;left:320px;top:296px;width:108px;height:23px;background:#b6d7a8;"></div>
<div style="position:absolute;left:427px;top:296px;width:200px;height:23px;background:#e8e7fa;"></div>
<div style="position:absolute;left:626px;top:296px;width:129px;height:23px;background:#e8e7fa;"></div>
<div style="position:absolute;left:1046px;top:296px;width:205px;height:23px;background:#e8e7fa;"></div>
<div style="position:absolute;left:1250px;top:296px;width:113px;height:23px;background:#e8e7fa;"></div>
<div style="position:absolute;left:1362px;top:296px;width:181px;height:23px;background:#e8e7fa;"></div>
<div style="position:absolute;left:320px;top:340px;width:108px;height:23px;background:#ffe599;"></div>
<div style="position:absolute;left:427px;top:340px;width:200px;height:23px;background:#e8e7fa;"></div>
<div style="position:absolute;left:626px;top:340px;width:129px;height:23px;background:#e8e7fa;"></div>
<div style="position:absolute;left:1046px;top:340px;width:205px;height:23px;background:#e8e7fa;"></div>
<div style="position:absolute;left:1250px;top:340px;width:113px;height:23px;background:#e8e7fa;"></div>
<div style="position:absolute;left:1362px;top:340px;width:181px;height:23px;background:#e8e7fa;"></div>
<div style="position:absolute;left:320px;top:363px;width:108px;height:23px;background:#ffe599;"></div>
<div style="position:absolute;left:320px;top:386px;width:108px;height:23px;background:#ffe599;"></div>
<div style="position:absolute;left:427px;top:386px;width:200px;height:23px;background:#e8e7fa;"></div>
<div style="position:absolute;left:626px;top:386px;width:129px;height:23px;background:#e8e7fa;"></div>
<div style="position:absolute;left:1046px;top:386px;width:205px;height:23px;background:#e8e7fa;"></div>
<div style="position:absolute;left:1250px;top:386px;width:113px;height:23px;background:#e8e7fa;"></div>
<div style="position:absolute;left:1362px;top:386px;width:181px;height:23px;background:#e8e7fa;"></div>
<div style="position:absolute;left:320px;top:409px;width:108px;height:23px;background:#ffe599;"></div>
<div style="position:absolute;left:320px;top:432px;width:108px;height:23px;background:#ffe599;"></div>
<div style="position:absolute;left:427px;top:432px;width:200px;height:23px;background:#e8e7fa;"></div>
<div style="position:absolute;left:626px;top:432px;width:129px;height:23px;background:#e8e7fa;"></div>
<div style="position:absolute;left:1046px;top:432px;width:205px;height:23px;background:#e8e7fa;"></div>
<div style="position:absolute;left:1250px;top:432px;width:113px;height:23px;background:#e8e7fa;"></div>
<div style="position:absolute;left:1362px;top:432px;width:181px;height:23px;background:#e8e7fa;"></div>
<div style="position:absolute;left:320px;top:476px;width:108px;height:23px;background:#a2c4c9;"></div>
<div style="position:absolute;left:320px;top:499px;width:108px;height:23px;background:#a2c4c9;"></div>
<div style="position:absolute;left:427px;top:499px;width:200px;height:23px;background:#e8e7fa;"></div>
<div style="position:absolute;left:626px;top:499px;width:129px;height:23px;background:#e8e7fa;"></div>
<div style="position:absolute;left:1046px;top:499px;width:205px;height:23px;background:#e8e7fa;"></div>
<div style="position:absolute;left:1250px;top:499px;width:113px;height:23px;background:#e8e7fa;"></div>
<div style="position:absolute;left:1362px;top:499px;width:181px;height:23px;background:#e8e7fa;"></div>
<div style="position:absolute;left:320px;top:522px;width:108px;height:23px;background:#a2c4c9;"></div>
<div style="position:absolute;left:320px;top:545px;width:108px;height:23px;background:#a2c4c9;"></div>
<div style="position:absolute;left:427px;top:545px;width:200px;height:23px;background:#e8e7fa;"></div>
<div style="position:absolute;left:626px;top:545px;width:129px;height:23px;background:#e8e7fa;"></div>
<div style="position:absolute;left:1046px;top:545px;width:205px;height:23px;background:#e8e7fa;"></div>
<div style="position:absolute;left:1250px;top:545px;width:113px;height:23px;background:#e8e7fa;"></div>
<div style="position:absolute;left:1362px;top:545px;width:181px;height:23px;background:#e8e7fa;"></div>
<div style="position:absolute;left:320px;top:589px;width:108px;height:23px;background:#d9d2e9;"></div>
<div style="position:absolute;left:427px;top:589px;width:200px;height:23px;background:#e8e7fa;"></div>
<div style="position:absolute;left:626px;top:589px;width:129px;height:23px;background:#e8e7fa;"></div>
<div style="position:absolute;left:1046px;top:589px;width:205px;height:23px;background:#e8e7fa;"></div>
<div style="position:absolute;left:1250px;top:589px;width:113px;height:23px;background:#e8e7fa;"></div>
<div style="position:absolute;left:1362px;top:589px;width:181px;height:23px;background:#e8e7fa;"></div>
<div style="position:absolute;left:320px;top:612px;width:108px;height:23px;background:#d9d2e9;"></div>
<div style="position:absolute;left:1362px;top:612px;width:181px;height:23px;background:#e8e7fa;"></div>
<div style="position:absolute;left:320px;top:635px;width:108px;height:23px;background:#d9d2e9;"></div>
<div style="position:absolute;left:427px;top:635px;width:200px;height:23px;background:#e8e7fa;"></div>
<div style="position:absolute;left:626px;top:635px;width:129px;height:23px;background:#e8e7fa;"></div>
<div style="position:absolute;left:1046px;top:635px;width:205px;height:23px;background:#e8e7fa;"></div>
<div style="position:absolute;left:1250px;top:635px;width:113px;height:23px;background:#e8e7fa;"></div>
<div style="position:absolute;left:1362px;top:635px;width:181px;height:23px;background:#e8e7fa;"></div>
<div style="position:absolute;left:320px;top:658px;width:108px;height:23px;background:#d9d2e9;"></div>
<div style="position:absolute;left:427px;top:658px;width:200px;height:23px;background:#e8e7fa;"></div>
<div style="position:absolute;left:626px;top:658px;width:129px;height:23px;background:#e8e7fa;"></div>
<div style="position:absolute;left:1046px;top:658px;width:205px;height:23px;background:#e8e7fa;"></div>
<div style="position:absolute;left:1250px;top:658px;width:113px;height:23px;background:#e8e7fa;"></div>
<div style="position:absolute;left:1362px;top:658px;width:181px;height:23px;background:#e8e7fa;"></div>
<div style="position:absolute;left:320px;top:681px;width:108px;height:23px;background:#d9d2e9;"></div>
<div style="position:absolute;left:1362px;top:681px;width:181px;height:23px;background:#e8e7fa;"></div>
<div style="position:absolute;left:320px;top:731px;width:108px;height:23px;background:#ead1dc;"></div>
<div style="position:absolute;left:427px;top:731px;width:200px;height:23px;background:#e8e7fa;"></div>
<div style="position:absolute;left:626px;top:731px;width:129px;height:23px;background:#e8e7fa;"></div>
<div style="position:absolute;left:1046px;top:731px;width:205px;height:23px;background:#e8e7fa;"></div>
<div style="position:absolute;left:1250px;top:731px;width:113px;height:23px;background:#e8e7fa;"></div>
<div style="position:absolute;left:1362px;top:731px;width:181px;height:23px;background:#e8e7fa;"></div>
<div style="position:absolute;left:320px;top:754px;width:108px;height:23px;background:#ead1dc;"></div>
<div style="position:absolute;left:320px;top:777px;width:108px;height:23px;background:#ead1dc;"></div>
<div style="position:absolute;left:427px;top:777px;width:200px;height:23px;background:#e8e7fa;"></div>
<div style="position:absolute;left:626px;top:777px;width:129px;height:23px;background:#e8e7fa;"></div>
<div style="position:absolute;left:1046px;top:777px;width:205px;height:23px;background:#e8e7fa;"></div>
<div style="position:absolute;left:1250px;top:777px;width:113px;height:23px;background:#e8e7fa;"></div>
<div style="position:absolute;left:1362px;top:777px;width:181px;height:23px;background:#e8e7fa;"></div>
<div style="position:absolute;left:320px;top:800px;width:108px;height:23px;background:#ead1dc;"></div>
<div style="position:absolute;left:1046px;top:800px;width:205px;height:23px;background:#e8e7fa;"></div>
<div style="position:absolute;left:320px;top:844px;width:108px;height:23px;background:#c9daf8;"></div>
<div style="position:absolute;left:427px;top:844px;width:200px;height:23px;background:#e8e7fa;"></div>
<div style="position:absolute;left:626px;top:844px;width:129px;height:23px;background:#e8e7fa;"></div>
<div style="position:absolute;left:1046px;top:844px;width:205px;height:23px;background:#e8e7fa;"></div>
<div style="position:absolute;left:1250px;top:844px;width:113px;height:23px;background:#e8e7fa;"></div>
<div style="position:absolute;left:1362px;top:844px;width:181px;height:23px;background:#e8e7fa;"></div>
<div style="position:absolute;left:320px;top:867px;width:108px;height:23px;background:#c9daf8;"></div>
<div style="position:absolute;left:320px;top:890px;width:108px;height:23px;background:#c9daf8;"></div>
<div style="position:absolute;left:427px;top:890px;width:200px;height:23px;background:#e8e7fa;"></div>
<div style="position:absolute;left:626px;top:890px;width:129px;height:23px;background:#e8e7fa;"></div>
<div style="position:absolute;left:1046px;top:890px;width:205px;height:23px;background:#e8e7fa;"></div>
<div style="position:absolute;left:1250px;top:890px;width:113px;height:23px;background:#e8e7fa;"></div>
<div style="position:absolute;left:1362px;top:890px;width:181px;height:23px;background:#e8e7fa;"></div>
<div style="position:absolute;left:36px;top:225px;width:284px;height:94px;background:#b6d7a8;"></div>
<div style="position:absolute;left:36px;top:340px;width:284px;height:115px;background:#ffe599;"></div>
<div style="position:absolute;left:36px;top:476px;width:284px;height:92px;background:#a2c4c9;"></div>
<div style="position:absolute;left:36px;top:589px;width:284px;height:115px;background:#d9d2e9;"></div>
<div style="position:absolute;left:36px;top:731px;width:284px;height:92px;background:#ead1dc;"></div>
<div style="position:absolute;left:36px;top:844px;width:284px;height:69px;background:#c9daf8;"></div>
<div style="position:absolute;left:321px;top:250px;width:1221px;height:1px;background:rgba(0,0,0,0.12);"></div>
<div style="position:absolute;left:321px;top:273px;width:1221px;height:1px;background:rgba(0,0,0,0.12);"></div>
<div style="position:absolute;left:321px;top:296px;width:1221px;height:1px;background:rgba(0,0,0,0.12);"></div>
<div style="position:absolute;left:321px;top:319px;width:1221px;height:1px;background:rgba(0,0,0,0.12);"></div>
<div style="position:absolute;left:36px;top:319px;width:284px;height:1px;background:rgba(0,0,0,0.12);"></div>
<div style="position:absolute;left:321px;top:340px;width:1221px;height:1px;background:rgba(0,0,0,0.12);"></div>
<div style="position:absolute;left:36px;top:340px;width:284px;height:1px;background:rgba(0,0,0,0.12);"></div>
<div style="position:absolute;left:321px;top:363px;width:1221px;height:1px;background:rgba(0,0,0,0.12);"></div>
<div style="position:absolute;left:321px;top:386px;width:1221px;height:1px;background:rgba(0,0,0,0.12);"></div>
<div style="position:absolute;left:321px;top:409px;width:1221px;height:1px;background:rgba(0,0,0,0.12);"></div>
<div style="position:absolute;left:321px;top:432px;width:1221px;height:1px;background:rgba(0,0,0,0.12);"></div>
<div style="position:absolute;left:321px;top:455px;width:1221px;height:1px;background:rgba(0,0,0,0.12);"></div>
<div style="position:absolute;left:36px;top:455px;width:284px;height:1px;background:rgba(0,0,0,0.12);"></div>
<div style="position:absolute;left:321px;top:476px;width:1221px;height:1px;background:rgba(0,0,0,0.12);"></div>
<div style="position:absolute;left:36px;top:476px;width:284px;height:1px;background:rgba(0,0,0,0.12);"></div>
<div style="position:absolute;left:321px;top:499px;width:1221px;height:1px;background:rgba(0,0,0,0.12);"></div>
<div style="position:absolute;left:321px;top:522px;width:1221px;height:1px;background:rgba(0,0,0,0.12);"></div>
<div style="position:absolute;left:321px;top:545px;width:1221px;height:1px;background:rgba(0,0,0,0.12);"></div>
<div style="position:absolute;left:321px;top:568px;width:1221px;height:1px;background:rgba(0,0,0,0.12);"></div>
<div style="position:absolute;left:36px;top:568px;width:284px;height:1px;background:rgba(0,0,0,0.12);"></div>
<div style="position:absolute;left:321px;top:589px;width:1221px;height:1px;background:rgba(0,0,0,0.12);"></div>
<div style="position:absolute;left:36px;top:589px;width:284px;height:1px;background:rgba(0,0,0,0.12);"></div>
<div style="position:absolute;left:321px;top:612px;width:1221px;height:1px;background:rgba(0,0,0,0.12);"></div>
<div style="position:absolute;left:321px;top:635px;width:1221px;height:1px;background:rgba(0,0,0,0.12);"></div>
<div style="position:absolute;left:321px;top:658px;width:1221px;height:1px;background:rgba(0,0,0,0.12);"></div>
<div style="position:absolute;left:321px;top:681px;width:1221px;height:1px;background:rgba(0,0,0,0.12);"></div>
<div style="position:absolute;left:321px;top:704px;width:1221px;height:1px;background:rgba(0,0,0,0.12);"></div>
<div style="position:absolute;left:36px;top:704px;width:284px;height:1px;background:rgba(0,0,0,0.12);"></div>
<div style="position:absolute;left:321px;top:731px;width:1221px;height:1px;background:rgba(0,0,0,0.12);"></div>
<div style="position:absolute;left:36px;top:731px;width:284px;height:1px;background:rgba(0,0,0,0.12);"></div>
<div style="position:absolute;left:321px;top:754px;width:1221px;height:1px;background:rgba(0,0,0,0.12);"></div>
<div style="position:absolute;left:321px;top:777px;width:1221px;height:1px;background:rgba(0,0,0,0.12);"></div>
<div style="position:absolute;left:321px;top:800px;width:1221px;height:1px;background:rgba(0,0,0,0.12);"></div>
<div style="position:absolute;left:321px;top:823px;width:1221px;height:1px;background:rgba(0,0,0,0.12);"></div>
<div style="position:absolute;left:36px;top:823px;width:284px;height:1px;background:rgba(0,0,0,0.12);"></div>
<div style="position:absolute;left:321px;top:844px;width:1221px;height:1px;background:rgba(0,0,0,0.12);"></div>
<div style="position:absolute;left:36px;top:844px;width:284px;height:1px;background:rgba(0,0,0,0.12);"></div>
<div style="position:absolute;left:321px;top:867px;width:1221px;height:1px;background:rgba(0,0,0,0.12);"></div>
<div style="position:absolute;left:321px;top:890px;width:1221px;height:1px;background:rgba(0,0,0,0.12);"></div>
<div style="position:absolute;left:321px;top:913px;width:1221px;height:1px;background:rgba(0,0,0,0.12);"></div>
<div style="position:absolute;left:36px;top:913px;width:284px;height:1px;background:rgba(0,0,0,0.12);"></div>
<div style="position:absolute;left:320px;top:225px;width:1px;height:690px;background:rgba(0,0,0,0.12);"></div>
<div style="position:absolute;left:427px;top:225px;width:1px;height:690px;background:rgba(0,0,0,0.12);"></div>
<div style="position:absolute;left:626px;top:225px;width:1px;height:690px;background:rgba(0,0,0,0.12);"></div>
<div style="position:absolute;left:754px;top:225px;width:1px;height:690px;background:rgba(0,0,0,0.12);"></div>
<div style="position:absolute;left:945px;top:225px;width:1px;height:690px;background:rgba(0,0,0,0.12);"></div>
<div style="position:absolute;left:1046px;top:225px;width:1px;height:690px;background:rgba(0,0,0,0.12);"></div>
<div style="position:absolute;left:1250px;top:225px;width:1px;height:690px;background:rgba(0,0,0,0.12);"></div>
<div style="position:absolute;left:1362px;top:225px;width:1px;height:690px;background:rgba(0,0,0,0.12);"></div>
<div style="position:absolute;left:1542px;top:225px;width:1px;height:690px;background:rgba(0,0,0,0.12);"></div>
<div style="position:absolute;left:36px;top:262px;white-space:nowrap;width:284px;text-align:center;font-size:18px;line-height:24px;font-weight:bold;color:#000;letter-spacing:0px;text-indent:0px;">Leaders</div>
<div style="position:absolute;left:36px;top:388px;white-space:nowrap;width:284px;text-align:center;font-size:18px;line-height:24px;font-weight:bold;color:#000;letter-spacing:0.8px;text-indent:0.8px;">MERN</div>
<div style="position:absolute;left:36px;top:511px;white-space:nowrap;width:284px;text-align:center;font-size:18px;line-height:24px;font-weight:bold;color:#000;letter-spacing:1.0px;text-indent:1.0px;">Flutter</div>
<div style="position:absolute;left:36px;top:635px;white-space:nowrap;width:284px;text-align:center;font-size:18px;line-height:24px;font-weight:bold;color:#000;letter-spacing:2.2px;text-indent:2.2px;">UI/UX</div>
<div style="position:absolute;left:36px;top:766px;white-space:nowrap;width:284px;text-align:center;font-size:18px;line-height:24px;font-weight:bold;color:#000;letter-spacing:1.4px;text-indent:1.4px;">Python</div>
<div style="position:absolute;left:36px;top:867px;white-space:nowrap;width:284px;text-align:center;font-size:18px;line-height:24px;font-weight:bold;color:#000;letter-spacing:0.5px;text-indent:0.5px;">SQA</div>
<div style="position:absolute;left:321px;top:230px;white-space:nowrap;width:106px;text-align:center;font-size:13.3px;line-height:16px;color:#000;font-weight:bold;">15805</div>
<div style="position:absolute;left:321px;top:255px;white-space:nowrap;width:106px;text-align:center;font-size:13.3px;line-height:16px;color:#000;font-size:14.3px;">16003</div>
<div style="position:absolute;left:321px;top:345px;white-space:nowrap;width:106px;text-align:center;font-size:13.3px;line-height:16px;color:#000;font-weight:bold;">15921</div>
<div style="position:absolute;left:321px;top:368px;white-space:nowrap;width:106px;text-align:center;font-size:13.3px;line-height:16px;color:#000;font-weight:bold;">16239</div>
<div style="position:absolute;left:321px;top:736px;white-space:nowrap;width:106px;text-align:center;font-size:13.3px;line-height:16px;color:#000;font-weight:bold;">15994</div>
<div style="position:absolute;left:431px;top:229px;white-space:nowrap;font-size:13.3px;line-height:16px;color:#000;">Al Taj</div>
<div style="position:absolute;left:431px;top:255px;white-space:nowrap;font-size:13.3px;line-height:16px;color:#000;">Md. Sakhawat Hossain</div>
<div style="position:absolute;left:431px;top:346px;white-space:nowrap;font-size:13.3px;line-height:16px;color:#000;">Fi Amanillah</div>
<div style="position:absolute;left:431px;top:369px;white-space:nowrap;font-size:13.3px;line-height:16px;color:#000;">Aminul Islam Arnob</div>
<div style="position:absolute;left:431px;top:736px;white-space:nowrap;font-size:13.3px;line-height:16px;color:#000;">Azizur Rahaman</div>
<div style="position:absolute;left:630px;top:229px;white-space:nowrap;font-size:13.3px;line-height:16px;color:#000;">altaj1_mern_dev</div>
<div style="position:absolute;left:630px;top:346px;white-space:nowrap;font-size:13.3px;line-height:16px;color:#000;">fiamanillahb2</div>
<div style="position:absolute;left:630px;top:369px;white-space:nowrap;font-size:13.3px;line-height:16px;color:#000;">Aminul_Arnob</div>
<div style="position:absolute;left:630px;top:736px;white-space:nowrap;font-size:13.3px;line-height:16px;color:#000;">@azizur016</div>
<div style="position:absolute;left:758px;top:229px;white-space:nowrap;font-size:13.3px;line-height:16px;color:#000;">Leader</div>
<div style="position:absolute;left:758px;top:255px;white-space:nowrap;font-size:13.3px;line-height:16px;color:#000;">Co Leader</div>
<div style="position:absolute;left:1050px;top:229px;white-space:nowrap;font-size:13.3px;line-height:16px;color:#000;">altaj1mern@gmail.com</div>
<div style="position:absolute;left:1047px;top:369px;white-space:nowrap;width:203px;text-align:center;font-size:13.3px;line-height:16px;color:#000;">aiarnob23@gmail.com</div>
<div style="position:absolute;left:1047px;top:737px;white-space:nowrap;width:203px;text-align:center;font-size:13.3px;line-height:16px;color:#000;">aboutazizur@gmail.com</div>
<div style="position:absolute;left:1366px;top:229px;white-space:nowrap;font-size:13.3px;line-height:16px;color:#000;">altaj1merndev</div>
<div style="position:absolute;left:1366px;top:346px;white-space:nowrap;font-size:13.3px;line-height:16px;color:#000;">fiamanillah</div>
<div style="position:absolute;left:1366px;top:369px;white-space:nowrap;font-size:13.3px;line-height:16px;color:#000;">aiarnob23</div>
<div style="position:absolute;left:1366px;top:737px;white-space:nowrap;font-size:13.3px;line-height:16px;color:#000;">azizurrahamangithub</div>
<div style="position:absolute;left:955px;top:227px;width:82px;height:18px;background:#bfe1f6;border-radius:9.0px;"></div>
<div style="position:absolute;left:961px;top:228.5px;white-space:nowrap;font-size:13.3px;line-height:16px;color:#0a53a8;">Friday</div>
<svg style="position:absolute;left:1021px;top:233px;" width="10" height="6" viewBox="0 0 10 6" preserveAspectRatio="none"><path d="M0 0H10L5.0 5z" fill="#0a53a8"/></svg>
<div style="position:absolute;left:955px;top:253px;width:82px;height:18px;background:#e8e9ec;border-radius:9.0px;"></div>
<svg style="position:absolute;left:1021px;top:259px;" width="10" height="6" viewBox="0 0 10 6" preserveAspectRatio="none"><path d="M0 0H10L5.0 5z" fill="#000"/></svg>
<div style="position:absolute;left:955px;top:276px;width:82px;height:18px;background:#e8e9ec;border-radius:9.0px;"></div>
<svg style="position:absolute;left:1021px;top:282px;" width="10" height="6" viewBox="0 0 10 6" preserveAspectRatio="none"><path d="M0 0H10L5.0 5z" fill="#000"/></svg>
<div style="position:absolute;left:955px;top:299px;width:82px;height:18px;background:#e8e9ec;border-radius:9.0px;"></div>
<svg style="position:absolute;left:1021px;top:305px;" width="10" height="6" viewBox="0 0 10 6" preserveAspectRatio="none"><path d="M0 0H10L5.0 5z" fill="#000"/></svg>
<div style="position:absolute;left:955px;top:343px;width:82px;height:18px;background:#11734b;border-radius:9.0px;"></div>
<div style="position:absolute;left:955px;top:344.5px;white-space:nowrap;width:66px;text-align:center;font-size:13.3px;line-height:16px;color:#d4edbc;">Sunday</div>
<svg style="position:absolute;left:1021px;top:349px;" width="10" height="6" viewBox="0 0 10 6" preserveAspectRatio="none"><path d="M0 0H10L5.0 5z" fill="#d4edbc"/></svg>
<div style="position:absolute;left:955px;top:366px;width:82px;height:18px;background:#bfe1f6;border-radius:9.0px;"></div>
<div style="position:absolute;left:955px;top:367.5px;white-space:nowrap;width:66px;text-align:center;font-size:13.3px;line-height:16px;color:#0a53a8;">Friday</div>
<svg style="position:absolute;left:1021px;top:372px;" width="10" height="6" viewBox="0 0 10 6" preserveAspectRatio="none"><path d="M0 0H10L5.0 5z" fill="#0a53a8"/></svg>
<div style="position:absolute;left:955px;top:389px;width:82px;height:18px;background:#e8e9ec;border-radius:9.0px;"></div>
<svg style="position:absolute;left:1021px;top:395px;" width="10" height="6" viewBox="0 0 10 6" preserveAspectRatio="none"><path d="M0 0H10L5.0 5z" fill="#000"/></svg>
<div style="position:absolute;left:955px;top:412px;width:82px;height:18px;background:#e8e9ec;border-radius:9.0px;"></div>
<svg style="position:absolute;left:1021px;top:418px;" width="10" height="6" viewBox="0 0 10 6" preserveAspectRatio="none"><path d="M0 0H10L5.0 5z" fill="#000"/></svg>
<div style="position:absolute;left:955px;top:435px;width:82px;height:18px;background:#e8e9ec;border-radius:9.0px;"></div>
<svg style="position:absolute;left:1021px;top:441px;" width="10" height="6" viewBox="0 0 10 6" preserveAspectRatio="none"><path d="M0 0H10L5.0 5z" fill="#000"/></svg>
<div style="position:absolute;left:955px;top:479px;width:82px;height:18px;background:#e8e9ec;border-radius:9.0px;"></div>
<svg style="position:absolute;left:1021px;top:485px;" width="10" height="6" viewBox="0 0 10 6" preserveAspectRatio="none"><path d="M0 0H10L5.0 5z" fill="#000"/></svg>
<div style="position:absolute;left:955px;top:502px;width:82px;height:18px;background:#e8e9ec;border-radius:9.0px;"></div>
<svg style="position:absolute;left:1021px;top:508px;" width="10" height="6" viewBox="0 0 10 6" preserveAspectRatio="none"><path d="M0 0H10L5.0 5z" fill="#000"/></svg>
<div style="position:absolute;left:955px;top:525px;width:82px;height:18px;background:#e8e9ec;border-radius:9.0px;"></div>
<svg style="position:absolute;left:1021px;top:531px;" width="10" height="6" viewBox="0 0 10 6" preserveAspectRatio="none"><path d="M0 0H10L5.0 5z" fill="#000"/></svg>
<div style="position:absolute;left:955px;top:548px;width:82px;height:18px;background:#e8e9ec;border-radius:9.0px;"></div>
<svg style="position:absolute;left:1021px;top:554px;" width="10" height="6" viewBox="0 0 10 6" preserveAspectRatio="none"><path d="M0 0H10L5.0 5z" fill="#000"/></svg>
<div style="position:absolute;left:955px;top:592px;width:82px;height:18px;background:#e8e9ec;border-radius:9.0px;"></div>
<svg style="position:absolute;left:1021px;top:598px;" width="10" height="6" viewBox="0 0 10 6" preserveAspectRatio="none"><path d="M0 0H10L5.0 5z" fill="#000"/></svg>
<div style="position:absolute;left:955px;top:615px;width:82px;height:18px;background:#e8e9ec;border-radius:9.0px;"></div>
<svg style="position:absolute;left:1021px;top:621px;" width="10" height="6" viewBox="0 0 10 6" preserveAspectRatio="none"><path d="M0 0H10L5.0 5z" fill="#000"/></svg>
<div style="position:absolute;left:955px;top:638px;width:82px;height:18px;background:#e8e9ec;border-radius:9.0px;"></div>
<svg style="position:absolute;left:1021px;top:644px;" width="10" height="6" viewBox="0 0 10 6" preserveAspectRatio="none"><path d="M0 0H10L5.0 5z" fill="#000"/></svg>
<div style="position:absolute;left:955px;top:661px;width:82px;height:18px;background:#e8e9ec;border-radius:9.0px;"></div>
<svg style="position:absolute;left:1021px;top:667px;" width="10" height="6" viewBox="0 0 10 6" preserveAspectRatio="none"><path d="M0 0H10L5.0 5z" fill="#000"/></svg>
<div style="position:absolute;left:955px;top:684px;width:82px;height:18px;background:#e8e9ec;border-radius:9.0px;"></div>
<svg style="position:absolute;left:1021px;top:690px;" width="10" height="6" viewBox="0 0 10 6" preserveAspectRatio="none"><path d="M0 0H10L5.0 5z" fill="#000"/></svg>
<div style="position:absolute;left:955px;top:734px;width:82px;height:18px;background:#bfe1f6;border-radius:9.0px;"></div>
<div style="position:absolute;left:955px;top:735.5px;white-space:nowrap;width:66px;text-align:center;font-size:13.3px;line-height:16px;color:#0a53a8;">Friday</div>
<svg style="position:absolute;left:1021px;top:740px;" width="10" height="6" viewBox="0 0 10 6" preserveAspectRatio="none"><path d="M0 0H10L5.0 5z" fill="#0a53a8"/></svg>
<div style="position:absolute;left:955px;top:757px;width:82px;height:18px;background:#e8e9ec;border-radius:9.0px;"></div>
<svg style="position:absolute;left:1021px;top:763px;" width="10" height="6" viewBox="0 0 10 6" preserveAspectRatio="none"><path d="M0 0H10L5.0 5z" fill="#000"/></svg>
<div style="position:absolute;left:955px;top:780px;width:82px;height:18px;background:#e8e9ec;border-radius:9.0px;"></div>
<svg style="position:absolute;left:1021px;top:786px;" width="10" height="6" viewBox="0 0 10 6" preserveAspectRatio="none"><path d="M0 0H10L5.0 5z" fill="#000"/></svg>
<div style="position:absolute;left:955px;top:803px;width:82px;height:18px;background:#e8e9ec;border-radius:9.0px;"></div>
<svg style="position:absolute;left:1021px;top:809px;" width="10" height="6" viewBox="0 0 10 6" preserveAspectRatio="none"><path d="M0 0H10L5.0 5z" fill="#000"/></svg>
<div style="position:absolute;left:955px;top:847px;width:82px;height:18px;background:#e8e9ec;border-radius:9.0px;"></div>
<svg style="position:absolute;left:1021px;top:853px;" width="10" height="6" viewBox="0 0 10 6" preserveAspectRatio="none"><path d="M0 0H10L5.0 5z" fill="#000"/></svg>
<div style="position:absolute;left:955px;top:870px;width:82px;height:18px;background:#e8e9ec;border-radius:9.0px;"></div>
<svg style="position:absolute;left:1021px;top:876px;" width="10" height="6" viewBox="0 0 10 6" preserveAspectRatio="none"><path d="M0 0H10L5.0 5z" fill="#000"/></svg>
<div style="position:absolute;left:955px;top:893px;width:82px;height:18px;background:#e8e9ec;border-radius:9.0px;"></div>
<svg style="position:absolute;left:1021px;top:899px;" width="10" height="6" viewBox="0 0 10 6" preserveAspectRatio="none"><path d="M0 0H10L5.0 5z" fill="#000"/></svg>
<div style="position:absolute;left:1260px;top:345px;width:93px;height:16px;background:#e8e9ec;border-radius:8.0px;"></div>
<svg style="position:absolute;left:1338px;top:351px;" width="9" height="5" viewBox="0 0 9 5" preserveAspectRatio="none"><path d="M0 0H9L4.5 4z" fill="#000"/></svg>
<div style="position:absolute;left:1260px;top:368px;width:93px;height:16px;background:#e8e9ec;border-radius:8.0px;"></div>
<svg style="position:absolute;left:1338px;top:374px;" width="9" height="5" viewBox="0 0 9 5" preserveAspectRatio="none"><path d="M0 0H9L4.5 4z" fill="#000"/></svg>
<div style="position:absolute;left:1260px;top:391px;width:93px;height:16px;background:#e8e9ec;border-radius:8.0px;"></div>
<svg style="position:absolute;left:1338px;top:397px;" width="9" height="5" viewBox="0 0 9 5" preserveAspectRatio="none"><path d="M0 0H9L4.5 4z" fill="#000"/></svg>
<div style="position:absolute;left:1260px;top:414px;width:93px;height:16px;background:#e8e9ec;border-radius:8.0px;"></div>
<svg style="position:absolute;left:1338px;top:420px;" width="9" height="5" viewBox="0 0 9 5" preserveAspectRatio="none"><path d="M0 0H9L4.5 4z" fill="#000"/></svg>
<div style="position:absolute;left:1056px;top:345px;width:185px;height:16px;background:#e8e9ec;border-radius:8px;"></div>
<div style="position:absolute;left:1064px;top:346px;white-space:nowrap;font-size:13.3px;line-height:16px;color:#000;">fiamanillahb2@gmail.com</div>
<svg style="position:absolute;left:1226px;top:351px;" width="9" height="5" viewBox="0 0 9 5" preserveAspectRatio="none"><path d="M0 0H9L4.5 4z" fill="#000"/></svg>
<svg style="position:absolute;left:1244px;top:341px;" width="6" height="6" viewBox="0 0 6 6" preserveAspectRatio="none"><path d="M0 0H6V6z" fill="#ea4335"/></svg>
<div style="position:absolute;left:427px;top:777px;width:200px;height:24px;border:1px solid #000;"></div>
<div style="position:absolute;left:427px;top:197px;width:620px;height:1px;background:#188038;"></div>
<div style="position:absolute;left:427px;top:823px;width:620px;height:1px;background:#188038;"></div>
<div style="position:absolute;left:427px;top:197px;width:1px;height:24px;background:#188038;"></div>
<div style="position:absolute;left:1046px;top:197px;width:1px;height:24px;background:#188038;"></div>
<div style="position:absolute;left:427px;top:225px;width:1px;height:599px;background:#188038;"></div>
<div style="position:absolute;left:1046px;top:225px;width:1px;height:599px;background:#188038;"></div>
<div style="position:absolute;left:945px;top:340px;width:102px;height:24px;border:2px solid #0b57d0;"></div>
<div style="position:absolute;left:1042.5px;top:359.5px;width:9px;height:9px;background:#0b57d0;border-radius:50%;border:1px solid #fff;"></div>
<div style="position:absolute;left:1544px;top:226px;width:9px;height:25px;background:#dadce0;border-radius:5px;"></div>
<div style="position:absolute;left:1542px;top:880px;width:12px;height:31px;background:#f8f9fa;"></div>
<div style="position:absolute;left:1542px;top:880px;width:12px;height:1px;background:#e8eaed;"></div>
<div style="position:absolute;left:1542px;top:896px;width:12px;height:1px;background:#e8eaed;"></div>
<svg style="position:absolute;left:1544px;top:885px;" width="8" height="6" viewBox="0 0 8 6" preserveAspectRatio="none"><path d="M0 5H8L4 1z" fill="#9aa0a6"/></svg>
<svg style="position:absolute;left:1544px;top:901px;" width="8" height="6" viewBox="0 0 8 6" preserveAspectRatio="none"><path d="M0 1H8L4 5z" fill="#9aa0a6"/></svg>
<div style="position:absolute;left:1570px;top:68px;width:320px;height:843px;background:#fff;border-radius:16px 16px 0 0;"></div>
<div style="position:absolute;left:1586px;top:86px;white-space:nowrap;font-size:16px;line-height:19px;color:#1f1f1f;letter-spacing:0.45px;">Data validation rules</div>
<svg style="position:absolute;left:1853px;top:88px;overflow:visible" width="20" height="20" viewBox="1853 88 20 20"><path d="M1858.5 92.8L1867.6 101.9M1867.6 92.8L1858.5 101.9" stroke="#444746" stroke-width="1.5" fill="none"/></svg>
<div style="position:absolute;left:1570px;top:124px;width:320px;height:1px;background:#dadce0;"></div>
<div style="position:absolute;left:1586px;top:142px;white-space:nowrap;font-size:14px;line-height:17px;color:#444746;letter-spacing:0.5px;">Apply to range</div>
<div style="position:absolute;left:1586px;top:167px;width:288px;height:36px;border:2px solid #0b57d0;border-radius:5px;"></div>
<div style="position:absolute;left:1597px;top:177px;width:1px;height:15px;background:#1f1f1f;"></div>
<div style="position:absolute;left:1597px;top:176px;white-space:nowrap;font-size:14px;line-height:17px;color:#1f1f1f;letter-spacing:0.05px;">'Pixel Pioneers 2.0 Team Member'!G8</div>
<svg style="position:absolute;left:1845px;top:175px;overflow:visible" width="20" height="20" viewBox="1845 175 20 20"><path d="M1847.9 178.8H1862.3V191H1847.9ZM1855.1 178.8V191M1847.9 184.9H1862.3" stroke="#5f6368" stroke-width="1.7" fill="none"/></svg>
<div style="position:absolute;left:1586px;top:228px;white-space:nowrap;font-size:14px;line-height:17px;color:#444746;letter-spacing:0.5px;">Criteria</div>
<div style="position:absolute;left:1586px;top:253px;width:288px;height:36px;border:1px solid #c7c7c7;border-radius:5px;"></div>
<div style="position:absolute;left:1595px;top:262px;white-space:nowrap;font-size:14px;line-height:17px;color:#1f1f1f;letter-spacing:0.2px;">Dropdown</div>
<svg style="position:absolute;left:1850px;top:265px;overflow:visible" width="14" height="10" viewBox="1850 265 14 10"><path d="M1852.7 268H1861.4L1857 272.3z" fill="#444746"/></svg>
<div style="position:absolute;left:1585px;top:321.8px;width:3.4px;height:3.4px;background:#747775;border-radius:50%;"></div>
<div style="position:absolute;left:1585px;top:328.1px;width:3.4px;height:3.4px;background:#747775;border-radius:50%;"></div>
<div style="position:absolute;left:1585px;top:334.40000000000003px;width:3.4px;height:3.4px;background:#747775;border-radius:50%;"></div>
<div style="position:absolute;left:1591.5px;top:321.8px;width:3.4px;height:3.4px;background:#747775;border-radius:50%;"></div>
<div style="position:absolute;left:1591.5px;top:328.1px;width:3.4px;height:3.4px;background:#747775;border-radius:50%;"></div>
<div style="position:absolute;left:1591.5px;top:334.40000000000003px;width:3.4px;height:3.4px;background:#747775;border-radius:50%;"></div>
<div style="position:absolute;left:1600px;top:313px;width:54px;height:36px;border:1px solid #c7c7c7;border-radius:5px;"></div>
<div style="position:absolute;left:1609px;top:320px;width:22px;height:22px;background:#bfe1f6;border-radius:50%;"></div>
<svg style="position:absolute;left:1638px;top:325px;overflow:visible" width="12" height="10" viewBox="1638 325 12 10"><path d="M1640 329H1648L1644 333z" fill="#444746"/></svg>
<div style="position:absolute;left:1664px;top:313px;width:147px;height:36px;border:1px solid #c7c7c7;border-radius:5px;"></div>
<div style="position:absolute;left:1673px;top:323px;white-space:nowrap;font-size:14px;line-height:17px;color:#444746;letter-spacing:0.1px;">Friday</div>
<svg style="position:absolute;left:1821px;top:320px;overflow:visible" width="20" height="22" viewBox="1821 320 20 22"><path d="M1823.2 323.4H1838.8M1828.2 323.4V322H1833.8V323.4M1825.3 323.6V339.4H1836.7V323.6M1829.6 326.8V336M1832.4 326.8V336" stroke="#5f6368" stroke-width="1.6" fill="none"/></svg>
<div style="position:absolute;left:1585px;top:373.8px;width:3.4px;height:3.4px;background:#747775;border-radius:50%;"></div>
<div style="position:absolute;left:1585px;top:380.1px;width:3.4px;height:3.4px;background:#747775;border-radius:50%;"></div>
<div style="position:absolute;left:1585px;top:386.40000000000003px;width:3.4px;height:3.4px;background:#747775;border-radius:50%;"></div>
<div style="position:absolute;left:1591.5px;top:373.8px;width:3.4px;height:3.4px;background:#747775;border-radius:50%;"></div>
<div style="position:absolute;left:1591.5px;top:380.1px;width:3.4px;height:3.4px;background:#747775;border-radius:50%;"></div>
<div style="position:absolute;left:1591.5px;top:386.40000000000003px;width:3.4px;height:3.4px;background:#747775;border-radius:50%;"></div>
<div style="position:absolute;left:1600px;top:365px;width:54px;height:36px;border:1px solid #c7c7c7;border-radius:5px;"></div>
<div style="position:absolute;left:1609px;top:372px;width:22px;height:22px;background:#11734b;border-radius:50%;"></div>
<svg style="position:absolute;left:1638px;top:377px;overflow:visible" width="12" height="10" viewBox="1638 377 12 10"><path d="M1640 381H1648L1644 385z" fill="#444746"/></svg>
<div style="position:absolute;left:1664px;top:365px;width:147px;height:36px;border:1px solid #c7c7c7;border-radius:5px;"></div>
<div style="position:absolute;left:1673px;top:375px;white-space:nowrap;font-size:14px;line-height:17px;color:#444746;letter-spacing:0.1px;">Sunday</div>
<svg style="position:absolute;left:1821px;top:372px;overflow:visible" width="20" height="22" viewBox="1821 372 20 22"><path d="M1823.2 375.4H1838.8M1828.2 375.4V374H1833.8V375.4M1825.3 375.6V391.4H1836.7V375.6M1829.6 378.8V388M1832.4 378.8V388" stroke="#5f6368" stroke-width="1.6" fill="none"/></svg>
<div style="position:absolute;left:1586px;top:409px;width:168px;height:36px;border:1px solid #c7c7c7;border-radius:5px;"></div>
<div style="position:absolute;left:1611px;top:418px;white-space:nowrap;font-size:14px;line-height:17px;color:#188038;-webkit-text-stroke:0.35px #188038;letter-spacing:0.65px;">Add another item</div>
<div style="position:absolute;left:1587px;top:466px;width:18px;height:18px;border:2px solid #444746;border-radius:2px;"></div>
<div style="position:absolute;left:1618px;top:467px;white-space:nowrap;font-size:14px;line-height:17px;color:#444746;letter-spacing:0.15px;">Allow multiple selections</div>
<div style="position:absolute;left:1611px;top:522px;white-space:nowrap;font-size:14px;line-height:17px;color:#188038;-webkit-text-stroke:0.35px #188038;letter-spacing:0.7px;">Advanced options</div>
<div style="position:absolute;left:1570px;top:855px;width:320px;height:1px;background:#dadce0;"></div>
<div style="position:absolute;left:1634px;top:872px;width:135px;height:36px;border:1px solid #c7c7c7;border-radius:5px;"></div>
<div style="position:absolute;left:1634px;top:882px;white-space:nowrap;width:135px;text-align:center;font-size:14.5px;line-height:17px;color:#188038;-webkit-text-stroke:0.35px #188038;letter-spacing:0.3px;">Remove rule</div>
<div style="position:absolute;left:1789px;top:872px;width:85px;height:36px;background:#188038;border-radius:5px;"></div>
<div style="position:absolute;left:1789px;top:882px;white-space:nowrap;width:85px;text-align:center;font-size:14.5px;line-height:17px;color:#fff;-webkit-text-stroke:0.35px #fff;letter-spacing:0.3px;">Done</div>
</div></body></html>
